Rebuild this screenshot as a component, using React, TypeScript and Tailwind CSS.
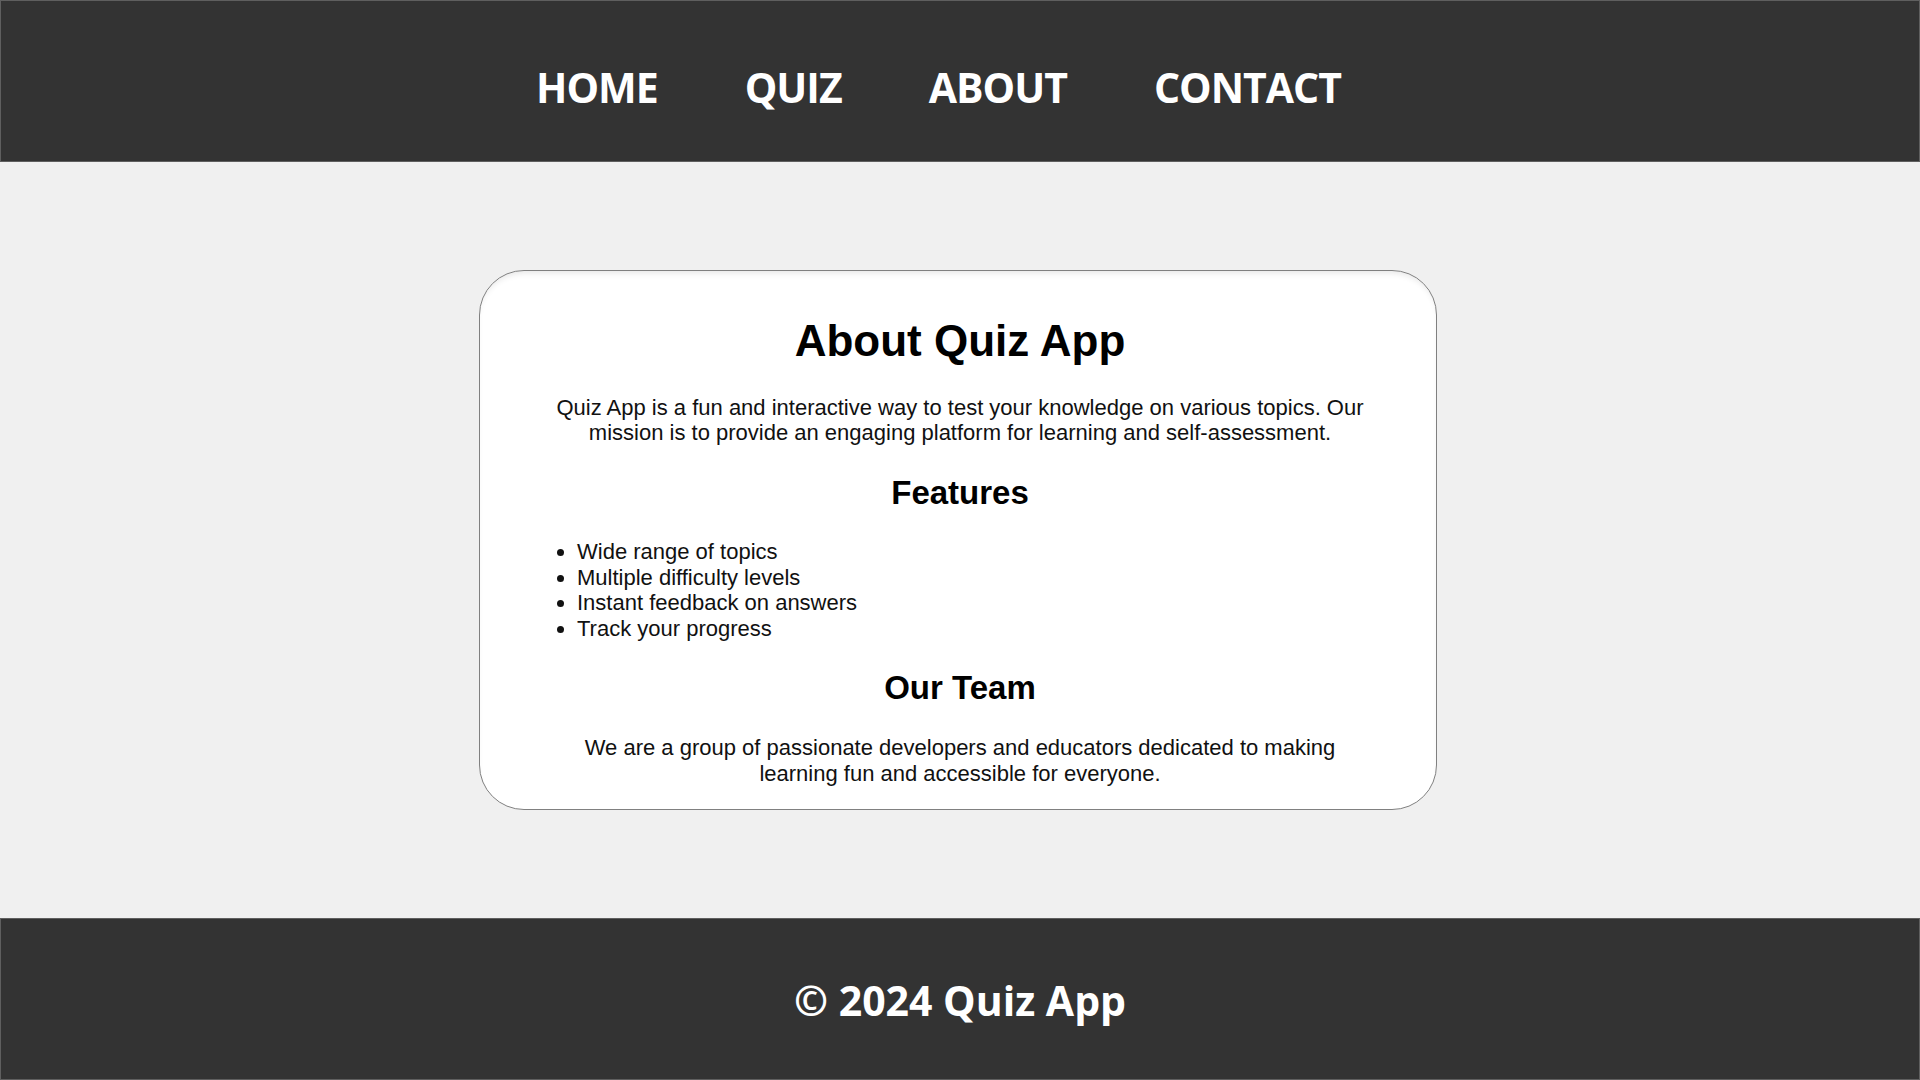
import React from "react";

const navItems = ["HOME", "QUIZ", "ABOUT", "CONTACT"];

const features = [
  "Wide range of topics",
  "Multiple difficulty levels",
  "Instant feedback on answers",
  "Track your progress",
];

export default function App() {
  return (
    <div className="flex flex-col h-screen bg-[#f0f0f0] font-['Liberation_Sans',Arial,sans-serif]">
      {/* Header */}
      <header className="h-[162px] shrink-0 bg-[#333333] border border-[#5f5f5f]">
        <nav className="pt-[62px]">
          <ul className="flex justify-center gap-[87px] pr-[43px] font-['Open_Sans',sans-serif] font-bold text-[41px] leading-[48px] tracking-[-1px] text-white">
            {navItems.map((item) => (
              <li key={item}>
                <a href="#" className="hover:text-gray-300">
                  {item}
                </a>
              </li>
            ))}
          </ul>
        </nav>
      </header>

      {/* Main */}
      <main className="flex-1 flex items-center justify-center">
        <section className="w-[958px] mr-[4px] rounded-[45px] border border-[#808080] bg-white pl-[71px] pr-[67px] pt-[45px] pb-[23px] text-center shadow-[inset_0_5px_6px_-3px_rgba(0,0,0,0.1)]">
          <h1 className="text-[44px] leading-[50px] font-bold text-black">
            About Quiz App
          </h1>
          <p className="mt-[29px] text-[22px] leading-[25.6px] text-[#111]">
            Quiz App is a fun and interactive way to test your knowledge on
            various topics. Our mission is to provide an engaging platform for
            learning and self-assessment.
          </p>

          <h2 className="mt-[27.5px] text-[33px] leading-[38px] font-bold text-black">
            Features
          </h2>
          <ul className="mt-[27.5px] list-disc pl-[26px] text-left text-[22px] leading-[25.6px] text-[#111]">
            {features.map((f) => (
              <li key={f}>{f}</li>
            ))}
          </ul>

          <h2 className="mt-[27.5px] text-[33px] leading-[38px] font-bold text-black">
            Our Team
          </h2>
          <p className="mt-[28px] text-[22px] leading-[25.6px] text-[#111]">
            We are a group of passionate developers and educators dedicated to
            making learning fun and accessible for everyone.
          </p>
        </section>
      </main>

      {/* Footer */}
      <footer className="h-[162px] shrink-0 bg-[#333333] border border-[#5f5f5f] pt-[57px] text-center">
        <p className="font-['Open_Sans',sans-serif] font-bold text-[41px] leading-[48px] text-white">
          © 2024 Quiz App
        </p>
      </footer>
    </div>
  );
}
